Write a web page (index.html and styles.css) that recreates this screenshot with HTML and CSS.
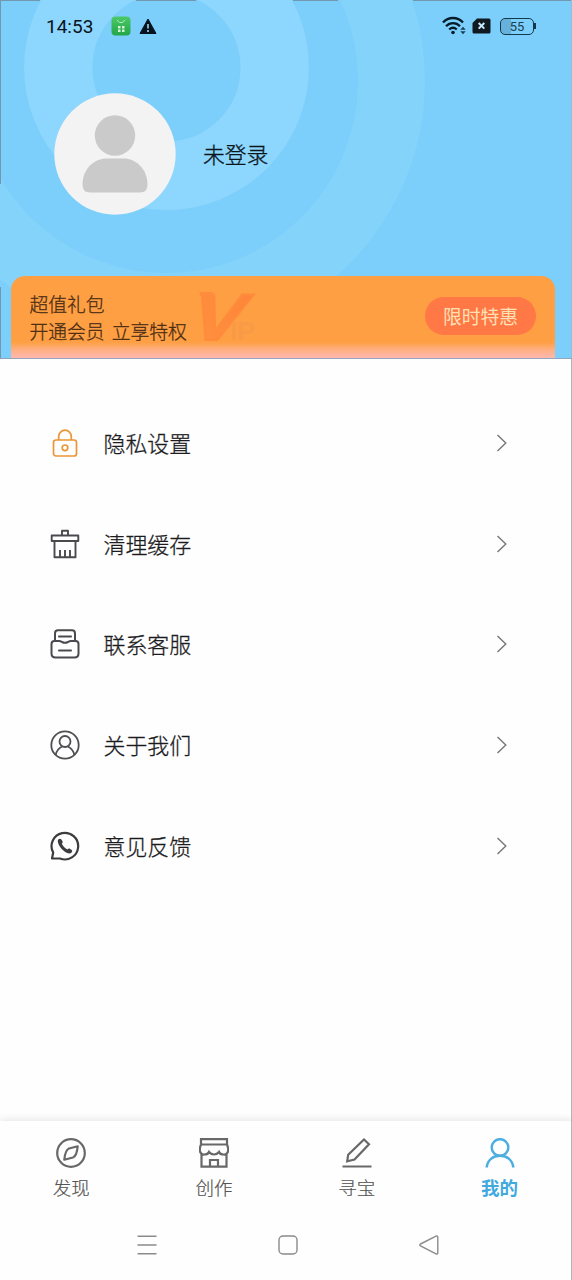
FILE: index.html
```html
<!DOCTYPE html>
<html lang="zh-CN">
<head>
<meta charset="utf-8">
<title>我的</title>
<link rel="stylesheet" href="styles.css">
</head>
<body>
<main class="screen">
  <header class="hero">
    <svg class="hero-rings" viewBox="0 0 572 359" fill="none">
      <circle cx="166" cy="81" r="225.500" stroke="#84d3fb" stroke-width="67"/>
      <circle cx="166.500" cy="67.500" r="108.200" stroke="#8dd6fd" stroke-width="68.500"/>
      <path d="M0 .5H40M136 .5H196M293 .5H338M413 .5H572M.5 0V184M.5 287V358" stroke="#7198af"/>
      <path d="M571.500 0V358" stroke="#96bfd5"/>
    </svg>
    <div class="status">
      <span class="clock">14:53</span>
      <svg class="app-badge" width="20" height="20" viewBox="0 0 20 20" fill="none">
        <defs><linearGradient id="leaf" x2="0" y2="1"><stop stop-color="#4bc968"/><stop offset="1" stop-color="#24a647"/></linearGradient></defs>
        <rect x=".5" y=".5" width="19" height="19" rx="4" fill="url(#leaf)"/>
        <path d="M6.500 4C7 7.500 13 7.500 13.500 4" stroke="#b9efbf"/>
        <path d="M7 10h2.500v2.500H7zM11 10h2.500v2.500H11zM7 13.500h2.500V16H7zM11 13.500h2.500V16H11z" fill="#d4f3d5"/>
      </svg>
      <svg class="warning" width="18" height="17" viewBox="0 0 18 17"><path d="M9 1 17 15.500H1Z" fill="#07131e" stroke="#07131e" stroke-linejoin="round"/><path d="M9 6v4.500M9 12v2" stroke="#8dbdd9" stroke-width="1.800"/></svg>
      <svg class="wifi" width="24" height="19" viewBox="0 0 24 19" fill="none" stroke="#071c2b" stroke-width="2.300">
        <path d="M1 6.500C6.500.5 15.500.5 21 6.500M4 10.200c4-4 10-4 14 0M7.200 13.500c2.500-2.300 5.100-2.300 7.600 0"/>
        <circle cx="11" cy="16.500" r="1.800" fill="#071c2b" stroke="none"/><path d="m18.300 13.700 2.700-3 2.700 3zM18.300 15.300l2.700 3 2.700-3z" fill="#16405a" stroke="none"/>
      </svg>
      <svg class="sim" width="19" height="16" viewBox="0 0 19 16"><path d="M5 .5h12A1.500 1.500 0 0 1 18.500 2v12a1.500 1.500 0 0 1-1.500 1.500H2A1.500 1.500 0 0 1 .5 14V5Z" fill="#101820"/><path d="m6.700 5 5.600 5.600m0-5.600-5.600 5.600" stroke="#c8e9fb" stroke-width="2"/></svg>
      <span class="battery">55</span>
    </div>
    <div class="profile">
      <svg class="avatar" width="122" height="122" viewBox="0 0 122 122"><circle cx="61" cy="61" r="60.700" fill="#f3f3f3"/><g fill="#cacaca"><circle cx="61" cy="42.500" r="20.200"/><path d="M28.500 92C28.500 74 42 65.500 52 65.500H70C81 65.500 93.500 75 93.500 92Q93.500 99.500 86 99.500H36Q28.500 99.500 28.500 92Z"/></g></svg>
      <span class="name">未登录</span>
    </div>
    <section class="vip">
      <div class="vip-copy"><p>超值礼包</p><p>开通会员 立享特权</p></div>
      <svg class="vip-mark" width="64" height="56" viewBox="0 0 64 56">
        <defs><linearGradient id="flame" x1="1" y1="0" x2="0" y2="1"><stop stop-color="#ff8338"/><stop offset="1" stop-color="#ff9340"/></linearGradient></defs>
        <path d="M3 3h14v6H6Z" fill="#ff8b3c"/>
        <text class="mark-v" x="0" y="0" transform="translate(-11 51) skewX(-20)" textLength="53" lengthAdjust="spacingAndGlyphs" fill="url(#flame)">V</text>
        <text class="mark-ip" x="34" y="51" textLength="25" lengthAdjust="spacingAndGlyphs">IP</text>
      </svg>
      <span class="offer">限时特惠</span>
    </section>
  </header>

  <section class="menu">
    <div class="row">
      <svg class="row-icon" viewBox="0 0 30 30" fill="none" stroke="#ea9536" stroke-width="1.700"><rect x="3.500" y="12" width="23" height="16" rx="2.500"/><path d="M8.700 12V8.500a6.300 6.300 0 0 1 12.600 0V12"/><circle cx="15" cy="19.800" r="2.800"/></svg>
      <span>隐私设置</span>
      <svg class="chevron" viewBox="0 0 12 18"><path d="m1.500 1 8.300 8-8.300 8"/></svg>
    </div>
    <div class="row">
      <svg class="row-icon" viewBox="0 0 30 30" fill="none" stroke="#4a4a4e" stroke-width="1.900" stroke-linejoin="round"><path d="M12 6.500V1.700h6v4.800M1.700 6.500h26.600V12H1.700zM4.500 12v16.300h21V12M10 28v-7M15 28v-7M20 28v-7"/></svg>
      <span>清理缓存</span>
      <svg class="chevron" viewBox="0 0 12 18"><path d="m1.500 1 8.300 8-8.300 8"/></svg>
    </div>
    <div class="row">
      <svg class="row-icon" viewBox="0 0 30 30" fill="none" stroke="#4a4a4e" stroke-width="2" stroke-linecap="round"><path d="M5 12V4.500Q5 1.300 8 1.300h14q3 0 3 3.200V12M9 7.500h12M9 21.500h12"/><path d="M4.500 12H9q1.500 0 3 1 3 1.500 6 0 1.500-1 3-1h4.500q3 0 3 3v9.500q0 4-4 4h-19q-4 0-4-4V15q0-3 3-3Z"/></svg>
      <span>联系客服</span>
      <svg class="chevron" viewBox="0 0 12 18"><path d="m1.500 1 8.300 8-8.300 8"/></svg>
    </div>
    <div class="row">
      <svg class="row-icon" viewBox="0 0 30 30" fill="none" stroke="#4f4f52" stroke-width="1.800"><circle cx="15" cy="15" r="13.700"/><circle cx="15" cy="11.500" r="5.500"/><path d="M5.700 25C6.500 20.500 10 17.500 12 16.500M24.300 25C23.500 20.500 20 17.500 18 16.500"/></svg>
      <span>关于我们</span>
      <svg class="chevron" viewBox="0 0 12 18"><path d="m1.500 1 8.300 8-8.300 8"/></svg>
    </div>
    <div class="row">
      <svg class="row-icon" viewBox="0 0 30 30" fill="none" stroke="#3c3c3f" stroke-width="2.200"><path d="M2 27.500 3.200 21.500A13.300 13.300 0 1 1 10 27.500Z" stroke-linejoin="round"/><path d="M8.200 8.500c1-.8 2.100-1.100 3-.2l1.200 1.600c.6 1 .2 2-.6 2.900 1.400 2.800 2.700 4.200 5.600 5.600.8-.9 1.800-1.200 2.800-.5l1.500 1.200c.9.8.5 2-.3 2.700-1.400 1.300-4.700.7-8.300-2.500-3.700-3.400-6.300-8.500-4.900-10.800Z" fill="#3c3c3f" stroke="none"/></svg>
      <span>意见反馈</span>
      <svg class="chevron" viewBox="0 0 12 18"><path d="m1.500 1 8.300 8-8.300 8"/></svg>
    </div>
  </section>

  <nav class="tabs">
    <div class="tab"><svg viewBox="0 0 30 30"><circle cx="15" cy="15" r="13.800"/><path d="M21.700 8.300Q20.700 18 17 19.500L8.300 21.700Q9.300 12 13 10.500Z" stroke-linejoin="round"/></svg><span>发现</span></div>
    <div class="tab"><svg viewBox="0 0 30 30"><path d="M2 1.200h26v5.300H2zM2 6.500Q.8 9 .8 12.500 1.500 17 5.500 16.500 9 16.500 10 14q2 2.500 5 2.500t5-2.500q1 2.500 4.500 2.500 4 .5 4.700-4Q29.200 9 28 6.500M2.500 16v12.700h25V16M11 28.500V22h8v6.500"/></svg><span>创作</span></div>
    <div class="tab"><svg viewBox="0 0 30 30"><path d="M.5 28.500h29M22 1.500l5 4.700L12.500 21.500 5.200 23.200 6.200 16.700Z"/></svg><span>寻宝</span></div>
    <div class="tab active"><svg viewBox="0 0 30 30"><circle cx="15" cy="9.500" r="8.300"/><path d="M1.700 29.500C2.300 22 8 17.800 15 17.800S27.700 22 28.300 29.500"/></svg><span>我的</span></div>
  </nav>

  <footer class="system">
    <svg width="20" height="20" viewBox="0 0 20 20"><path d="M.5 1.200h19M.5 10h19M.5 18.800h19"/></svg>
    <svg width="20" height="20" viewBox="0 0 20 20"><rect x="1" y="1" width="18" height="18" rx="4"/></svg>
    <svg width="20" height="20" viewBox="0 0 20 20"><path d="M1.500 9 17 1.200q1.800-.7 1.800 1.300v15q0 2-1.800 1.300L1.500 11q-1.500-1 0-2Z"/></svg>
  </footer>
</main>
</body>
</html>
```
FILE: styles.css
```css
* { box-sizing: border-box; }
body {
  margin: 0;
  background: #fefefe;
  font-family: "Noto Sans CJK SC", sans-serif;
  font-weight: 300;
}
.screen {
  width: 572px;
  height: 1280px;
  display: flex;
  flex-direction: column;
  overflow: hidden;
}
.hero {
  position: relative;
  height: 359px;
  flex: none;
  display: flex;
  flex-direction: column;
  background: #7ccefb;
  border-bottom: 1px solid #93a4bd;
  isolation: isolate;
}
.hero-rings {
  position: absolute;
  inset: 0;
  width: 572px;
  height: 359px;
  z-index: -1;
}
.status {
  height: 52px;
  display: flex;
  align-items: center;
  padding: 0 38px 0 46px;
}
.clock {
  width: 65px;
  padding-top: 2px;
  font: 400 19px/22px Roboto, sans-serif;
  color: #08131c;
}
.warning { margin-left: 8px; }
.wifi { margin: -2px 0 0 auto; }
.sim { margin: -1px 9px 0 6px; }
.battery {
  position: relative;
  width: 34px;
  height: 17px;
  border: 1.500px solid #16384d;
  border-radius: 5px;
  background: linear-gradient(90deg, #67b2dc 0 10px, transparent 10px);
  font: 13px/15px Roboto, sans-serif;
  text-align: center;
  color: #1d3e50;
}
.battery::after {
  content: "";
  position: absolute;
  right: -3px;
  top: 4px;
  width: 2px;
  height: 6px;
  background: #16384d;
}
.profile {
  display: flex;
  align-items: center;
  gap: 27px;
  margin: 41px 0 0 54px;
}
.name {
  font-size: 21.800px;
  line-height: 32px;
  color: #0b151c;
  -webkit-text-stroke: .3px currentColor;
}
.vip {
  margin: auto 17px 0 10.500px;
  height: 82px;
  display: flex;
  align-items: flex-start;
  padding: 14px 19px 0;
  border-radius: 14px 14px 0 0;
  background: linear-gradient(#ff9f43 0 66px, #ffae7c 73px, #ffb8b0 82px);
}
.vip-copy p {
  margin: 0;
  font-size: 18.800px;
  line-height: 27px;
  color: #4e2f16;
  white-space: nowrap;
  word-spacing: 3px;
  -webkit-text-stroke: .3px currentColor;
}
.vip-mark {
  margin: -1px 0 0 9px;
  overflow: visible;
}
.mark-v {
  font: 900 66px "Liberation Sans", sans-serif;
  stroke: #ff8b3c;
  stroke-width: 2px;
}
.mark-ip {
  font: 700 25px "Liberation Sans", sans-serif;
  fill: #f99a47;
}
.offer {
  margin: 7px 0 0 auto;
  width: 111px;
  height: 38px;
  border-radius: 19px;
  background: #ff7846;
  color: #ffe0b5;
  font-size: 18.800px;
  line-height: 38px;
  font-weight: 400;
  text-align: center;
}
.menu {
  flex: 1;
  padding-top: 33.500px;
  border-right: 1px solid #b5b5b5;
}
.row {
  height: 100.800px;
  display: flex;
  align-items: center;
  padding: 0 63px 0 50px;
  font-size: 21.900px;
  line-height: 32px;
  color: #1c1c1e;
  -webkit-text-stroke: .3px currentColor;
}
.row-icon {
  width: 30px;
  height: 30px;
  margin-right: 23.500px;
}
.chevron {
  width: 12px;
  height: 18px;
  margin-left: auto;
  fill: none;
  stroke: #77777a;
  stroke-width: 1.400;
}
.tabs {
  height: 90px;
  flex: none;
  display: grid;
  grid-template-columns: repeat(4, 1fr);
  padding-top: 17px;
  background: #fefefe;
  border-right: 1px solid #b5b5b5;
  box-shadow: 0 -1px 8px rgba(0, 0, 0, .11);
}
.tab {
  display: flex;
  flex-direction: column;
  align-items: center;
  font-size: 18.500px;
  line-height: 27px;
  color: #555;
  -webkit-text-stroke: .2px currentColor;
}
.tab svg {
  width: 30px;
  height: 30px;
  margin-bottom: 6px;
  fill: none;
  stroke: #686868;
  stroke-width: 2.200;
}
.tab.active {
  color: #42a9df;
  font-weight: 700;
  -webkit-text-stroke: 0;
}
.tab.active svg {
  stroke: #4daee0;
  stroke-width: 2.500;
}
.system {
  height: 69px;
  flex: none;
  display: grid;
  grid-template-columns: repeat(3, 141px);
  justify-items: center;
  align-items: center;
  padding: 0 0 2px 76px;
  border-right: 1px solid #b5b5b5;
  background: #fefefe;
}
.system svg {
  fill: none;
  stroke: #8b8b8b;
  stroke-width: 1.400;
}
```
